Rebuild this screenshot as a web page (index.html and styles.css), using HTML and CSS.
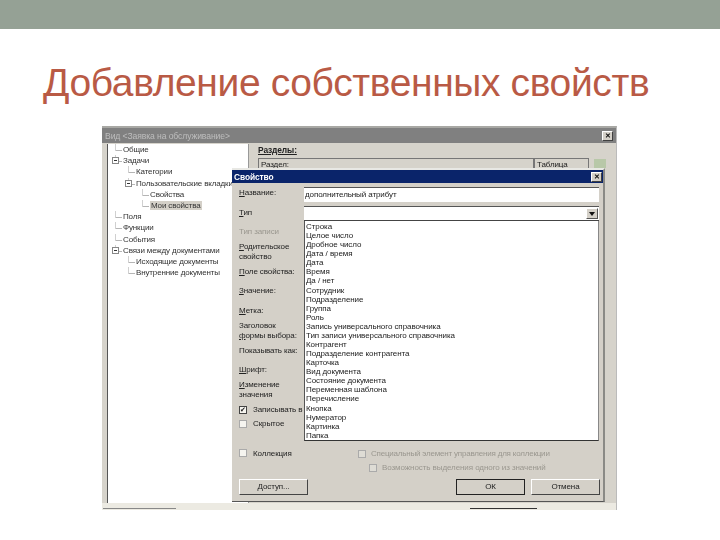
FILE: index.html
```html
<!DOCTYPE html>
<html lang="ru">
<head>
<meta charset="utf-8">
<title>Добавление собственных свойств</title>
<link rel="stylesheet" href="styles.css">
</head>
<body>
<div class="band"></div>
<h1 class="title">Добавление собственных свойств</h1>
<div class="window">
  <div class="win-title"><span>Вид &lt;Заявка на обслуживание&gt;</span><span class="x x-gray">✕</span></div>
  <div class="win-body">
    <ul class="tree">
      <li class="n0">Общие</li>
      <li class="n0 exp"><i class="box"></i>Задачи</li>
      <li class="n1">Категории</li>
      <li class="n1 exp"><i class="box"></i>Пользовательские вкладки</li>
      <li class="n2">Свойства</li>
      <li class="n2"><span class="sel">Мои свойства</span></li>
      <li class="n0">Поля</li>
      <li class="n0">Функции</li>
      <li class="n0">События</li>
      <li class="n0 exp"><i class="box"></i>Связи между документами</li>
      <li class="n1">Исходящие документы</li>
      <li class="n1">Внутренние документы</li>
    </ul>
    <div class="sections">
      <div class="sec-head">Разделы:</div>
      <div class="sec-table">
        <div class="sec-col sec-main">Раздел:</div>
        <div class="sec-col sec-type">Таблица</div>
        <div class="sec-green"></div>
      </div>
    </div>
  </div>
  <div class="win-foot"><span class="scroll scroll-a"></span><span class="scroll scroll-b"></span></div>

  <div class="dialog">
    <div class="dlg-title"><span>Свойство</span><span class="x">✕</span></div>
    <div class="dlg-main">
      <div class="labels">
        <div><u>Н</u>азвание:</div>
        <div><u>Т</u>ип</div>
        <div class="off">Тип записи</div>
        <div><u>Р</u>одительское<br>свойство</div>
        <div><u>П</u>оле свойства:</div>
        <div><u>З</u>начение:</div>
        <div><u>М</u>етка:</div>
        <div>Заголовок<br><u>ф</u>ормы выбора:</div>
        <div>Показывать как:</div>
        <div><u>Ш</u>рифт:</div>
        <div><u>И</u>зменение<br>значения</div>
        <div class="chk-row"><i class="chk on">✔</i>Записывать в</div>
        <div class="chk-row"><i class="chk"></i>Скрытое</div>
      </div>
      <div class="fields">
        <div class="input">дополнительный атрибут</div>
        <div class="input combo"><span class="arrow"></span></div>
        <ul class="list">
          <li>Строка</li>
          <li>Целое число</li>
          <li>Дробное число</li>
          <li>Дата / время</li>
          <li>Дата</li>
          <li>Время</li>
          <li>Да / нет</li>
          <li>Сотрудник</li>
          <li>Подразделение</li>
          <li>Группа</li>
          <li>Роль</li>
          <li>Запись универсального справочника</li>
          <li>Тип записи универсального справочника</li>
          <li>Контрагент</li>
          <li>Подразделение контрагента</li>
          <li>Карточка</li>
          <li>Вид документа</li>
          <li>Состояние документа</li>
          <li>Переменная шаблона</li>
          <li>Перечисление</li>
          <li>Кнопка</li>
          <li>Нумератор</li>
          <li>Картинка</li>
          <li>Папка</li>
        </ul>
      </div>
    </div>
    <div class="options">
      <div class="chk-row collection"><i class="chk"></i>Коллекция</div>
      <div class="disabled">
        <div class="chk-row off"><i class="chk dim"></i>Специальный элемент управления для коллекции</div>
        <div class="chk-row off second"><i class="chk dim"></i>Возможность выделения одного из значений</div>
      </div>
    </div>
    <div class="buttons">
      <div class="btn">Доступ...</div>
      <div class="spacer"></div>
      <div class="btn default">ОК</div>
      <div class="btn">Отмена</div>
    </div>
  </div>
</div>
</body>
</html>
```

FILE: styles.css
```css
* { box-sizing: border-box; }
html, body { margin: 0; padding: 0; }
body { width: 720px; height: 540px; background: #fff; overflow: hidden; font-family: "Liberation Sans", Arial, sans-serif; }
ul { list-style: none; margin: 0; padding: 0; }
i { font-style: normal; }

.band { height: 29px; background: #95a195; }
.title {
  margin: 31px 0 0 43px;
  font-size: 39px;
  line-height: 46px;
  font-weight: 400;
  letter-spacing: -0.37px;
  color: #b95a45;
  white-space: nowrap;
}

.window {
  position: relative;
  width: 515px;
  height: 384px;
  margin: 20px 0 0 102px;
  background: #d6d3cb;
  border-top: 2px solid #a8a8a4;
  border-right: 1px solid #bbb;
  font-size: 8px;
  letter-spacing: -0.1px;
  color: #222;
  display: flex;
  flex-direction: column;
  filter: blur(0.25px);
}
.win-title {
  height: 15px;
  background: #808080;
  color: #bdbdbd;
  padding: 0 3px;
  font-size: 8.6px;
  display: flex;
  justify-content: space-between;
  align-items: center;
}
.x {
  width: 11px;
  height: 10px;
  background: #d4d0c8;
  color: #111;
  border: 1px solid;
  border-color: #fff #404040 #404040 #fff;
  font-size: 7px;
  line-height: 8px;
  text-align: center;
  font-weight: 700;
}
.win-body {
  flex: 1;
  display: flex;
  padding: 1px 4px 0 5px;
  min-height: 0;
}
.tree {
  width: 141px;
  background: #fff;
  border-left: 1px solid #555;
  font-size: 8px;
  letter-spacing: -0.14px;
  color: #333;
}
.tree li { height: 11.2px; line-height: 11.2px; white-space: nowrap; position: relative; }
.n0 { padding-left: 15px; }
.n1 { padding-left: 28px; }
.n2 { padding-left: 42px; }
.tree li::before { content: ""; position: absolute; top: 6px; height: 1px; background: #b5b5b5; }
.tree li::after { content: ""; position: absolute; top: 0; height: 7px; width: 1px; background: #d0d0d0; }
.n0::before { left: 7px; width: 7px; }
.n1::before { left: 20px; width: 7px; }
.n2::before { left: 34px; width: 7px; }
.n0::after { left: 7px; }
.n1::after { left: 20px; }
.n2::after { left: 34px; }
.box {
  position: absolute;
  top: 2px;
  width: 7px;
  height: 7px;
  background: #fff;
  border: 1px solid #888;
  z-index: 1;
}
.box::after { content: ""; position: absolute; left: 1px; top: 2px; width: 3px; height: 1px; background: #333; }
.n0 .box { left: 4px; }
.n1 .box { left: 17px; }
.sel { background: #d4d0c8; padding: 0 1px; }

.sections { flex: 1; padding: 1px 0 0 9px; border-left: 1px solid #999; }
.sec-head { font-weight: 700; text-decoration: underline; font-size: 8.4px; line-height: 11px; }
.sec-table { display: flex; margin-top: 2px; height: 30px; }
.sec-col { border: 1px solid #777; border-bottom: 0; padding: 1px 2px; height: 14px; }
.sec-main { width: 276px; }
.sec-type { width: 55px; }
.sec-green { width: 12px; height: 9px; margin: 1px 0 0 5px; background: #b8c8a8; }

.win-foot {
  height: 7px;
  background: #eceae2;
  position: relative;
}
.scroll { position: absolute; top: 5px; height: 1px; background: #333; }
.scroll-a { left: 1px; width: 73px; background: #888; }
.scroll-b { left: 368px; width: 67px; }

.dialog {
  position: absolute;
  left: 130px;
  top: 40px;
  width: 373px;
  height: 334px;
  background: #d4d0c8;
  border-top: 2px solid #e8e8e4;
  border-right: 2px solid #8a8a86;
  border-bottom: 1px solid #555;
  display: flex;
  flex-direction: column;
}
.dlg-title {
  height: 13px;
  background: #0a246a;
  color: #fff;
  font-weight: 700;
  font-size: 8.4px;
  padding: 0 1px 0 2px;
  display: flex;
  justify-content: space-between;
  align-items: center;
}
.dlg-main { display: flex; padding-left: 7px; }
.labels {
  width: 65px;
  display: grid;
  grid-template-rows: 20px 20px 18px 22px 18px 20px 20px 19px 22px 16px 24px 16px 12px;
  align-items: center;
  line-height: 10px;
  white-space: nowrap;
}
.off { color: #9a978f; }
.chk-row { display: flex; align-items: center; gap: 6px; white-space: nowrap; }
.chk {
  width: 8px;
  height: 8px;
  flex: none;
  background: #f6f5f0;
  border: 1px solid #aaa;
  font-size: 7px;
  line-height: 6px;
  color: #222;
  text-align: center;
}
.chk.on { border-color: #444; }
.chk.dim { background: #dedcd5; }
.fields { width: 295px; padding-top: 4px; }
.input {
  height: 15px;
  background: #fff;
  border-top: 1px solid #555;
  padding: 1px 1px;
  line-height: 12px;
}
.combo { position: relative; margin-top: 4px; border-bottom: 1px solid #444; }
.arrow {
  position: absolute;
  right: 1px;
  top: 1px;
  width: 12px;
  height: 11px;
  background: #d4d0c8;
  border: 1px solid;
  border-color: #fff #555 #555 #fff;
}
.arrow::after {
  content: "";
  position: absolute;
  left: 2px;
  top: 3px;
  border: 3px solid transparent;
  border-top: 4px solid #111;
  border-bottom: 0;
}
.list {
  height: 220px;
  background: #fff;
  border-left: 1px solid #555;
  border-right: 1px solid #888;
  border-bottom: 1px solid #333;
  padding-top: 1px;
  letter-spacing: -0.07px;
}
.list li { height: 9.09px; line-height: 9.09px; padding-left: 1px; white-space: nowrap; }

.options { position: relative; display: flex; padding: 6px 0 0 7px; height: 38px; }
.collection { width: 119px; height: 12px; }
.disabled { letter-spacing: -0.2px; }
.disabled .chk-row { height: 13px; gap: 5px; }
.disabled .second { padding-left: 11px; margin-top: 1px; letter-spacing: -0.08px; }
.buttons { display: flex; gap: 6px; padding: 0 3px 0 7px; }
.spacer { flex: 1; }
.btn {
  width: 69px;
  height: 16px;
  line-height: 14px;
  text-align: center;
  background: #d4d0c8;
  border: 1px solid;
  border-color: #fff #444 #444 #fff;
}
.btn.default { border: 1px solid #222; }
```
